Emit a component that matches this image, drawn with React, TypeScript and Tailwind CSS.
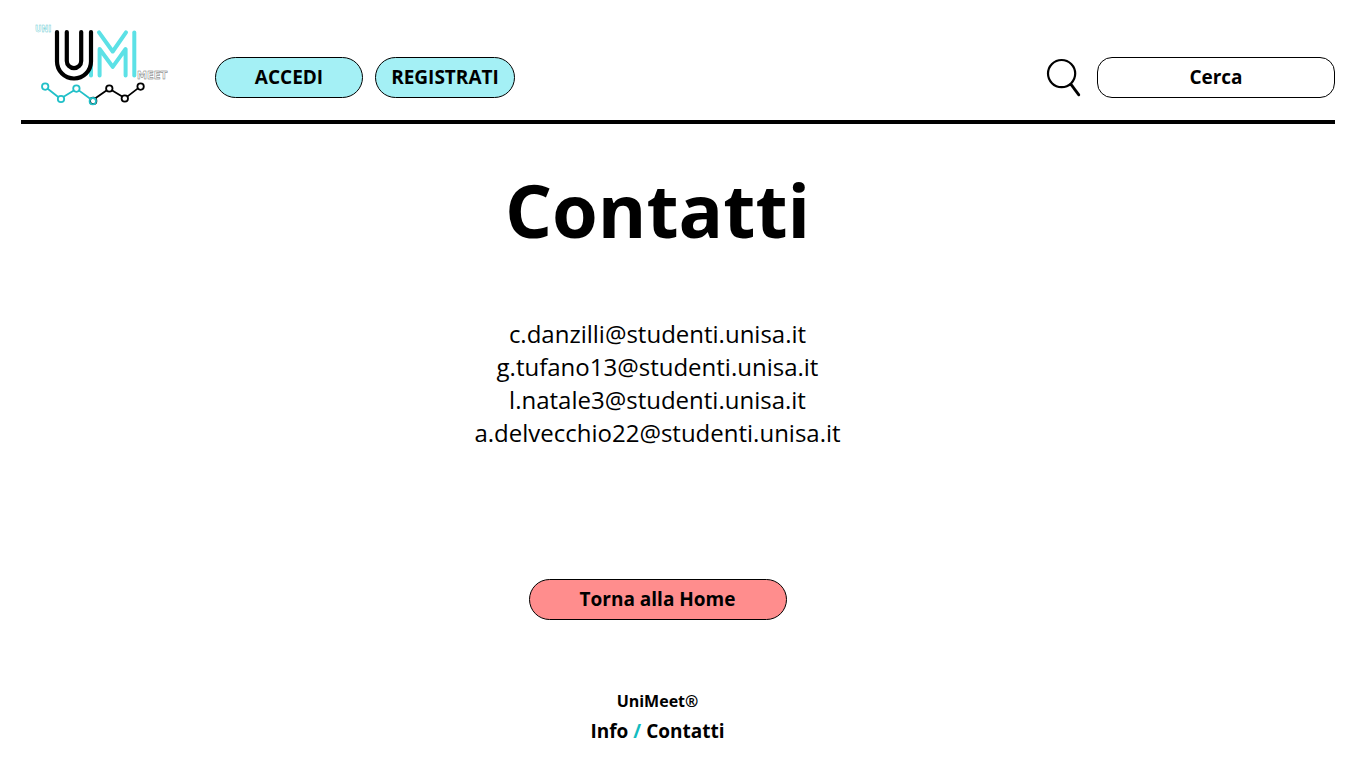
const EMAILS = [
  'c.danzilli@studenti.unisa.it',
  'g.tufano13@studenti.unisa.it',
  'l.natale3@studenti.unisa.it',
  'a.delvecchio22@studenti.unisa.it',
];

function Logo() {
  return (
    <svg viewBox="35 20 138 90" className="h-[90px] w-[138px]" fill="none" role="img" aria-label="UniMeet">
      <g stroke="#5ce1e6" strokeWidth="4" strokeLinecap="round" strokeLinejoin="round">
        <path d="M91 60V75.5" />
        <path d="M99 32.3L112.7 51.5L126 32.3" />
        <path d="M99.6 75.5V49L112.7 66.8L125.6 49V75.5" />
        <path d="M134.3 32.5V75.5" />
      </g>
      <g stroke="#000" strokeWidth="4.2" strokeLinecap="round">
        <path d="M57 32V61.5A17 17 0 0 0 91 61.5V32" />
        <path d="M66.8 32V61A7.2 7.2 0 0 0 81.2 61V32" />
      </g>
      <g stroke="#000" strokeWidth="1.8">
        <path d="M95 98.6L106.8 90.3M111.8 90.3L122.2 96.6M127.2 96.6L137.9 88.4" />
        <circle cx="109.3" cy="88.5" r="3.2" />
        <circle cx="124.8" cy="98.5" r="3.2" />
        <circle cx="140.6" cy="86.6" r="3.2" />
        <circle cx="93.2" cy="100.9" r="3.2" />
      </g>
      <g stroke="#22c0c8" strokeWidth="1.8">
        <path d="M47.4 88.5L58.2 97M63.2 97L73.8 90.4M78.8 90.4L90.2 98.8" />
        <circle cx="45.2" cy="86.6" r="3.2" />
        <circle cx="61" cy="99" r="3.2" />
        <circle cx="76.4" cy="88.6" r="3.2" />
        <circle cx="92.8" cy="101.2" r="3.2" />
      </g>
      <g fontFamily="'DejaVu Sans', sans-serif" fontWeight="700" strokeWidth="0.4" fill="#fff">
        <text x="35" y="31.8" fontSize="8" stroke="#5cc9d0">UNI</text>
        <text x="137" y="79" fontSize="10" stroke="#666">MEET</text>
      </g>
    </svg>
  );
}

function SearchIcon() {
  return (
    <svg viewBox="0 0 36 40" className="h-10 w-9" fill="none" stroke="#000" aria-hidden="true">
      <circle cx="16.6" cy="16.6" r="13.6" strokeWidth="2.2" />
      <path d="M26 27.4L33.8 37.8" strokeWidth="2.8" strokeLinecap="round" />
    </svg>
  );
}

export default function App() {
  return (
    <div className="min-h-screen bg-white pl-[21px] pr-[31px] font-['Open_Sans',sans-serif] text-black">
      <header className="flex h-[124px] items-start border-b-4 border-black">
        <a href="#home" className="ml-3.5 mt-5 shrink-0">
          <Logo />
        </a>
        <nav className="ml-[42px] mt-[57px] flex gap-3">
          <button type="button" className="h-[41px] w-[148px] rounded-full border border-black bg-[#a4f0f5] pb-0.5 text-[19px] leading-6 font-bold">
            ACCEDI
          </button>
          <button type="button" className="h-[41px] w-[140px] rounded-full border border-black bg-[#a4f0f5] pb-0.5 text-[19px] leading-6 font-bold">
            REGISTRATI
          </button>
        </nav>
        <form role="search" className="ml-auto mt-[57px] flex items-start gap-4" onSubmit={(e) => e.preventDefault()}>
          <button type="submit" aria-label="Cerca">
            <SearchIcon />
          </button>
          <input
            type="text"
            aria-label="Cerca"
            placeholder="Cerca"
            className="h-[41px] w-[238px] rounded-[15px] border border-black bg-white px-4 pb-0.5 text-center text-[19px] leading-6 font-bold placeholder:text-black placeholder:opacity-100"
          />
        </form>
      </header>

      <main className="flex flex-col items-center pr-[41px]">
        <h1 className="mt-[34px] text-[74px] leading-[104px] font-bold">Contatti</h1>
        <ul className="mt-[55px] text-center text-[24px] leading-[33px]">
          {EMAILS.map((email) => (
            <li key={email}>
              <a href={`mailto:${email}`}>{email}</a>
            </li>
          ))}
        </ul>
        <button type="button" className="mt-[130px] h-[41px] w-[258px] rounded-full border border-black bg-[#ff8d8d] pb-0.5 text-[19px] leading-6 font-bold">
          Torna alla Home
        </button>
      </main>

      <footer className="mt-[69px] flex flex-col items-center pr-[41px] font-bold">
        <p className="text-[16px] leading-6">UniMeet®</p>
        <p className="mt-1 text-[19px] leading-7">
          <a href="#info">Info</a> <span className="text-[#12bcc0]">/</span> <a href="#contatti">Contatti</a>
        </p>
      </footer>
    </div>
  );
}
